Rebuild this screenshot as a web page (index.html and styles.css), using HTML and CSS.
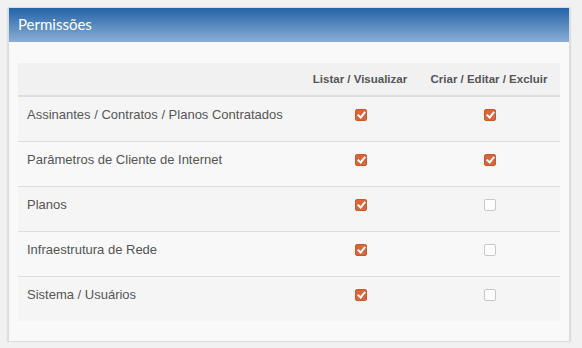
FILE: index.html
```html
<!doctype html>
<html>
 <head>
	<meta charset="UTF-8">
	<title>Permissões</title>
	<link rel="stylesheet" href="styles.css">
 </head>
 <body>
	<div class="panel">
		<div class="panel_head">Permissões</div>
		<div class="panel_body">
			<table class="perm">
				<tr>
					<th></th>
					<th>Listar / Visualizar</th>
					<th>Criar / Editar / Excluir</th>
				</tr>
				<tr>
					<td>Assinantes / Contratos / Planos Contratados</td>
					<td><span class="chk on"></span></td>
					<td><span class="chk on"></span></td>
				</tr>
				<tr>
					<td>Parâmetros de Cliente de Internet</td>
					<td><span class="chk on"></span></td>
					<td><span class="chk on"></span></td>
				</tr>
				<tr>
					<td>Planos</td>
					<td><span class="chk on"></span></td>
					<td><span class="chk"></span></td>
				</tr>
				<tr>
					<td>Infraestrutura de Rede</td>
					<td><span class="chk on"></span></td>
					<td><span class="chk"></span></td>
				</tr>
				<tr>
					<td>Sistema / Usuários</td>
					<td><span class="chk on"></span></td>
					<td><span class="chk"></span></td>
				</tr>
			</table>
		</div>
	</div>
 </body>
</html>
```

FILE: styles.css
```css
body{
	margin:0;
	padding:7px 12px 0 8px;
	background:#f1f1f1;
	font-family:"Liberation Sans",Arial,sans-serif;
	color:#555;
}
.panel{
	width:562px;
	background:#f9f9f9;
	border:1px solid #dcdcdc;
	box-shadow:0 1px 2px rgba(0,0,0,.25);
	box-sizing:border-box;
}
.panel_head{/* barra azul do título */
	height:34px;
	line-height:33px;
	padding-left:9px;
	font-family:Lato,"Open Sans",sans-serif;
	font-size:15px;
	color:#fff;
	background:linear-gradient(#2462a8,#8aaed6);
}
.panel_body{
	padding:21px 9px 20px 9px;
}
.perm{
	width:542px;
	border-collapse:collapse;
	background:#f5f5f5;
	font-size:13px;
}
.perm th{
	height:32px;
	padding:0 8px;
	font-size:11.5px;
	font-weight:bold;
	text-align:center;
	border-bottom:2px solid #dddddd;
	background:#f1f1f1;
	white-space:nowrap;
}
.perm th:nth-child(2){width:100px}
.perm th:nth-child(3){width:126px}
.perm td{
	height:44px;
	padding:0 8px 0 9px;
	vertical-align:top;
	line-height:36px;
	border-top:1px solid #dddddd;
}
.perm tr:nth-child(2) td{border-top:0}
.perm tr:nth-child(odd) td{background:#f8f8f8}
.perm td:nth-child(n+2){text-align:center}
/* caixas de seleção */
.chk{
	display:inline-block;
	width:10px;height:10px;
	border:1px solid #c8c8c8;
	border-radius:2px;
	background:#fff;
	vertical-align:-2px;
	position:relative;
}
.chk.on{
	border-color:#c85a30;
	background:#d9663b;
}
.chk.on:after{
	content:"";
	position:absolute;
	left:3px;top:0px;
	width:3px;height:6px;
	border:solid #fff;
	border-width:0 2px 2px 0;
	transform:rotate(40deg);
}
```
